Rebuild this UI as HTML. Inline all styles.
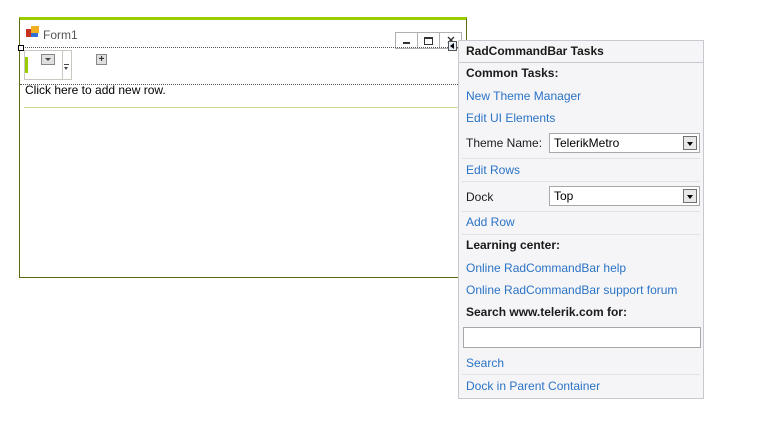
<!DOCTYPE html>
<html><head><style>
body{margin:0;width:775px;height:432px;background:#fff;position:relative;overflow:hidden;font-family:"Liberation Sans",sans-serif;font-size:12px;}
.a{position:absolute;white-space:nowrap;}
.l{color:#2a73c5;}
.b{font-weight:bold;color:#1a1a1a;}
.t{color:#1a1a1a;}
.sep{position:absolute;left:462px;width:238px;height:1px;background:#e2e2e6;}
.combo{position:absolute;left:549px;width:151px;height:20px;border:1px solid #a8a8a8;background:#fff;box-sizing:border-box;}
.combo span{position:absolute;left:4px;top:2px;}
.dd{position:absolute;right:2px;top:2px;width:14px;height:14px;border:1px solid #707070;background:#e8e8e8;box-sizing:border-box;}
.dd:after{content:"";position:absolute;left:3px;top:5px;border-left:3px solid transparent;border-right:3px solid transparent;border-top:4px solid #000;}
</style></head><body>
<div class="a" style="left:19px;top:17px;width:448px;height:261px;border-left:1px solid #5a6a10;border-right:1px solid #5a6a10;border-bottom:1px solid #5a6a10;border-top:3px solid #9acc00;box-sizing:border-box;background:#fff;"></div>
<div class="a" style="left:26px;top:26px;width:14px;height:12px;">
<div class="a" style="left:0;top:3px;width:5px;height:8px;background:#c83020;"></div>
<div class="a" style="left:5px;top:0;width:8px;height:7px;background:#f0b020;"></div>
<div class="a" style="left:5px;top:7px;width:7px;height:4px;background:#3070d0;"></div></div>
<div class="a t" style="left:43px;top:28px;color:#555;">Form1</div>
<div class="a" style="left:395px;top:32px;width:23px;height:17px;border:1px solid #b0b0b0;box-sizing:border-box;"><div class="a" style="left:7px;top:9px;width:7px;height:2px;background:#333"></div></div>
<div class="a" style="left:417px;top:32px;width:23px;height:17px;border:1px solid #b0b0b0;box-sizing:border-box;"><div class="a" style="left:6px;top:4px;width:7px;height:5px;border:1px solid #333;border-top-width:2px"></div></div>
<div class="a" style="left:439px;top:32px;width:23px;height:17px;border:1px solid #b0b0b0;box-sizing:border-box;"><svg class="a" style="left:7px;top:3px" width="8" height="8"><path d="M1 1L7 7M7 1L1 7" stroke="#333" stroke-width="1.4"/></svg></div>
<div class="a" style="left:20px;top:47px;width:440px;border-top:1px dotted #555;"></div>
<div class="a" style="left:18px;top:45px;width:4px;height:4px;border:1px solid #000;background:#fff;"></div>
<div class="a" style="left:20px;top:84px;width:440px;border-top:1px dotted #555;"></div>
<div class="a" style="left:24px;top:50px;width:48px;height:30px;border:1px solid #c8c8c0;box-sizing:border-box;"></div>
<div class="a" style="left:62px;top:50px;width:1px;height:30px;background:#c8c8c0;"></div>
<div class="a" style="left:25px;top:57px;width:3px;height:16px;background:#9acc00;"></div>
<div class="a" style="left:41px;top:54px;width:14px;height:11px;border:1px solid #888;background:#e0e0e0;box-sizing:border-box;"><div class="a" style="left:3px;top:3px;border-left:3px solid transparent;border-right:3px solid transparent;border-top:3px solid #444;"></div></div>
<div class="a" style="left:64px;top:64px;width:5px;height:1px;background:#444"></div>
<div class="a" style="left:64px;top:67px;border-left:2.5px solid transparent;border-right:2.5px solid transparent;border-top:3px solid #444;"></div>
<div class="a" style="left:96px;top:54px;width:11px;height:11px;border:1px solid #888;background:#e0e0e0;box-sizing:border-box;font-size:10px;line-height:9px;text-align:center;font-weight:bold;color:#333;">+</div>
<div class="a t" style="left:25px;top:83px;color:#000;">Click here to add new row.</div>
<div class="a" style="left:24px;top:107px;width:436px;height:1px;background:#c8dc88;"></div>
<div class="a" style="left:448px;top:41px;width:9px;height:10px;border:1px solid #555;background:#e8eef8;box-sizing:border-box;"><div class="a" style="left:1px;top:1px;border-top:3px solid transparent;border-bottom:3px solid transparent;border-right:4px solid #000;"></div></div>
<div class="a" style="left:458px;top:40px;width:246px;height:359px;background:#f5f5f7;border:1px solid #c8c8d0;box-sizing:border-box;"></div>
<div class="a" style="left:459px;top:62px;width:244px;height:1px;background:#c8c8d0;"></div>
<div class="a b" style="left:466px;top:44px;">RadCommandBar Tasks</div>
<div class="a b" style="left:466px;top:66px;">Common Tasks:</div>
<div class="a l" style="left:466px;top:89px;">New Theme Manager</div>
<div class="a l" style="left:466px;top:111px;">Edit UI Elements</div>
<div class="a t" style="left:466px;top:136px;">Theme Name:</div>
<div class="combo" style="top:133px;"><span>TelerikMetro</span><div class="dd"></div></div>
<div class="sep" style="top:158px;"></div>
<div class="a l" style="left:466px;top:163px;">Edit Rows</div>
<div class="sep" style="top:181px;"></div>
<div class="a t" style="left:466px;top:190px;">Dock</div>
<div class="combo" style="top:186px;"><span>Top</span><div class="dd"></div></div>
<div class="sep" style="top:211px;"></div>
<div class="a l" style="left:466px;top:215px;">Add Row</div>
<div class="sep" style="top:234px;"></div>
<div class="a b" style="left:466px;top:238px;">Learning center:</div>
<div class="a l" style="left:466px;top:261px;">Online RadCommandBar help</div>
<div class="a l" style="left:466px;top:283px;">Online RadCommandBar support forum</div>
<div class="a b" style="left:466px;top:305px;">Search www.telerik.com for:</div>
<div class="a" style="left:463px;top:327px;width:238px;height:21px;border:1px solid #a8a8a8;background:#fff;box-sizing:border-box;"></div>
<div class="a l" style="left:466px;top:356px;">Search</div>
<div class="sep" style="top:374px;"></div>
<div class="a l" style="left:466px;top:379px;">Dock in Parent Container</div>
</body></html>
